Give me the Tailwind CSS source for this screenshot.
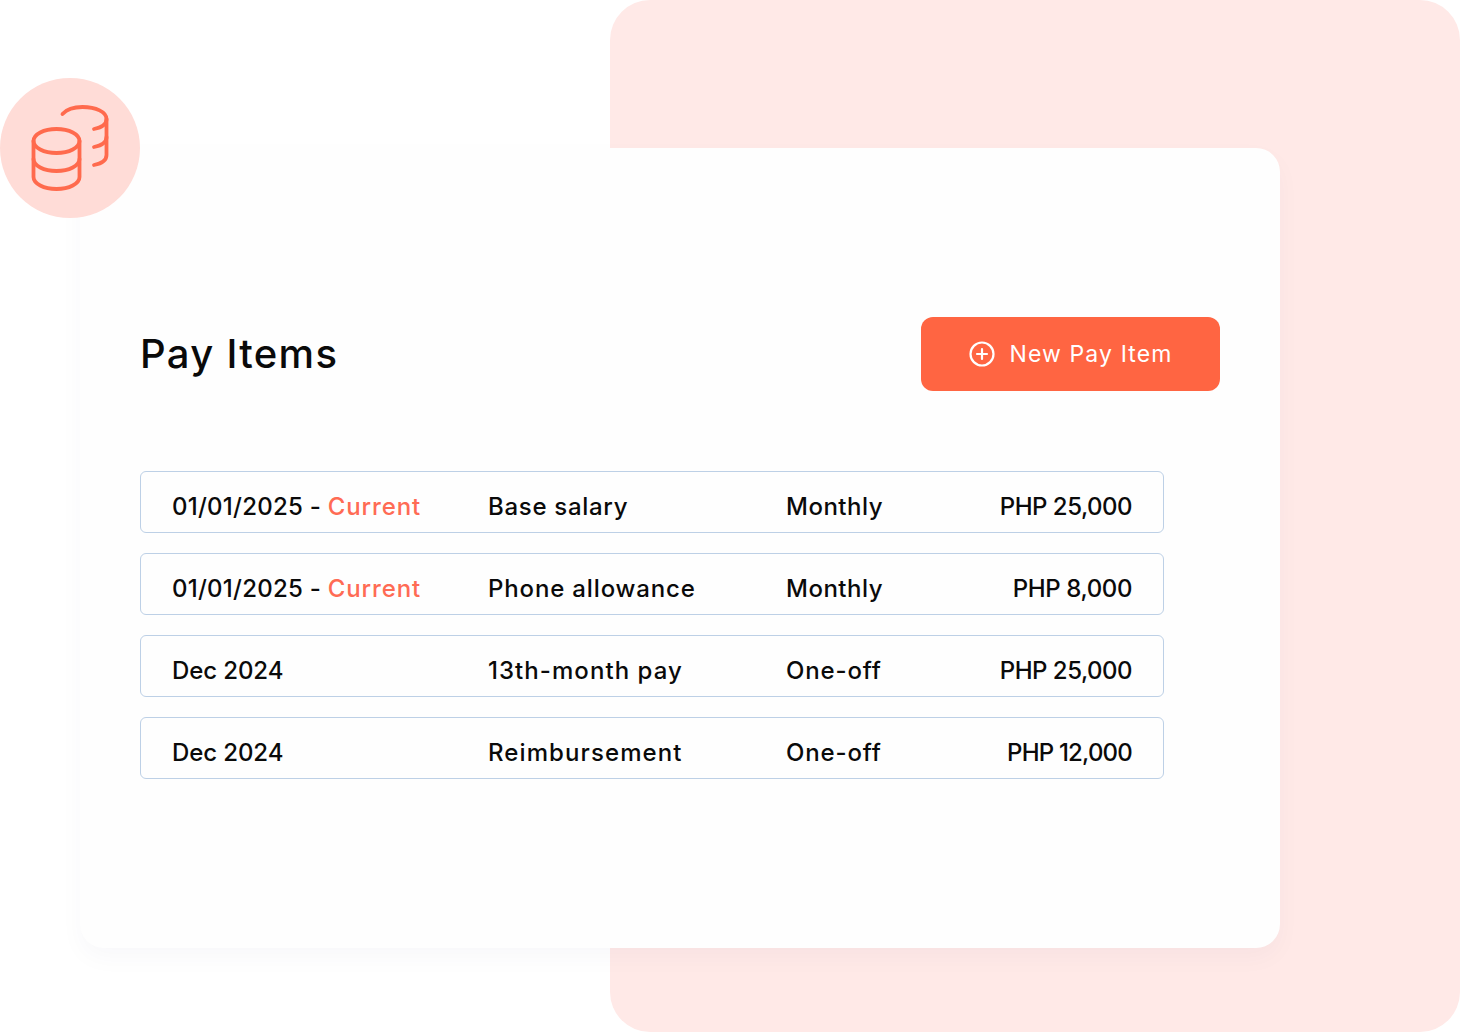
<!DOCTYPE html>
<html lang="en">
<head>
  <meta charset="UTF-8" />
  <title>Pay Items</title>
  <script src="https://cdn.jsdelivr.net/npm/@tailwindcss/browser@4"></script>
</head>
<body class="bg-white font-['Inter',sans-serif] text-[#0a0a0a]">
  <div class="relative w-[1460px] h-[1032px] overflow-hidden">
    <!-- pink panel behind the card -->
    <div class="absolute left-[610px] top-0 w-[850px] h-[1032px] rounded-[40px] bg-[#ffe9e7]"></div>

    <div class="absolute left-[80px] top-[148px] w-[1200px] h-[800px] rounded-[24px] bg-[#fefefe] shadow-[0_10px_24px_rgba(30,40,90,0.03)] pl-[60px] pr-[60px] pt-[169px]">
      <div class="flex items-center justify-between">
        <h1 class="text-[40px] leading-[74px] font-medium tracking-[1.3px]">Pay Items</h1>
        <button class="w-[299px] h-[74px] rounded-[12px] bg-[#ff6542] text-white flex items-center justify-center gap-[15px] text-[23px] font-normal tracking-[1.1px]">
          <svg class="w-[26px] h-[26px]" viewBox="0 0 26 26" fill="none" stroke="currentColor" stroke-width="2.2" stroke-linecap="round">
            <circle cx="13" cy="13" r="11.5" />
            <path d="M13 8v10M8 13h10" />
          </svg>
          New Pay Item
        </button>
      </div>

      <div class="mt-[80px] w-[1024px] flex flex-col gap-[20px] text-[24px] font-[450]">
        <div class="h-[62px] rounded-[6px] border border-[#bdd0e6] pl-[31px] pr-[31px] pt-[15px] grid grid-cols-[316px_298px_1fr_auto] leading-[40px]">
          <span class="tracking-[0.25px]">01/01/2025 - <span class="text-[#ff6b54] tracking-[0.9px]">Current</span></span>
          <span class="tracking-[0.7px]">Base salary</span>
          <span class="tracking-[0.5px]">Monthly</span>
          <span class="tracking-[-0.5px]">PHP 25,000</span>
        </div>
        <div class="h-[62px] rounded-[6px] border border-[#bdd0e6] pl-[31px] pr-[31px] pt-[15px] grid grid-cols-[316px_298px_1fr_auto] leading-[40px]">
          <span class="tracking-[0.25px]">01/01/2025 - <span class="text-[#ff6b54] tracking-[0.9px]">Current</span></span>
          <span class="tracking-[0.85px]">Phone allowance</span>
          <span class="tracking-[0.5px]">Monthly</span>
          <span class="tracking-[-0.4px]">PHP 8,000</span>
        </div>
        <div class="h-[62px] rounded-[6px] border border-[#bdd0e6] pl-[31px] pr-[31px] pt-[15px] grid grid-cols-[316px_298px_1fr_auto] leading-[40px]">
          <span class="tracking-[-0.1px]">Dec 2024</span>
          <span class="tracking-[1.05px]">13th-month pay</span>
          <span class="tracking-[0.85px]">One-off</span>
          <span class="tracking-[-0.5px]">PHP 25,000</span>
        </div>
        <div class="h-[62px] rounded-[6px] border border-[#bdd0e6] pl-[31px] pr-[31px] pt-[15px] grid grid-cols-[316px_298px_1fr_auto] leading-[40px]">
          <span class="tracking-[-0.1px]">Dec 2024</span>
          <span class="tracking-[1.1px]">Reimbursement</span>
          <span class="tracking-[0.85px]">One-off</span>
          <span class="tracking-[-0.8px]">PHP 12,000</span>
        </div>
      </div>
    </div>

    <!-- coins badge overlapping the card corner -->
    <div class="absolute left-0 top-[78px] w-[140px] h-[140px] rounded-full bg-[#ffdcd7]">
      <svg class="absolute left-0 top-0 w-[140px] h-[140px]" viewBox="0 0 140 140" fill="none" stroke="#ff6a4d" stroke-width="3.8" stroke-linecap="round" stroke-linejoin="round">
        <ellipse cx="56.500" cy="63" rx="23" ry="12" />
        <path d="M33.500 63v36c0 6.600 10.300 12 23 12s23-5.400 23-12V63" />
        <path d="M33.500 81c0 6.600 10.300 12 23 12s23-5.400 23-12" />
        <path d="M62.500 36c4-4.500 11-7 20-7 13.500 0 24 5 24 12v36c0 5-4.500 8.500-12.500 10" />
        <path d="M106.500 41c0 5-4.500 8.500-12.500 10M106.500 59c0 5-4.500 8.500-12.500 10" />
      </svg>
    </div>
  </div>
</body>
</html>
